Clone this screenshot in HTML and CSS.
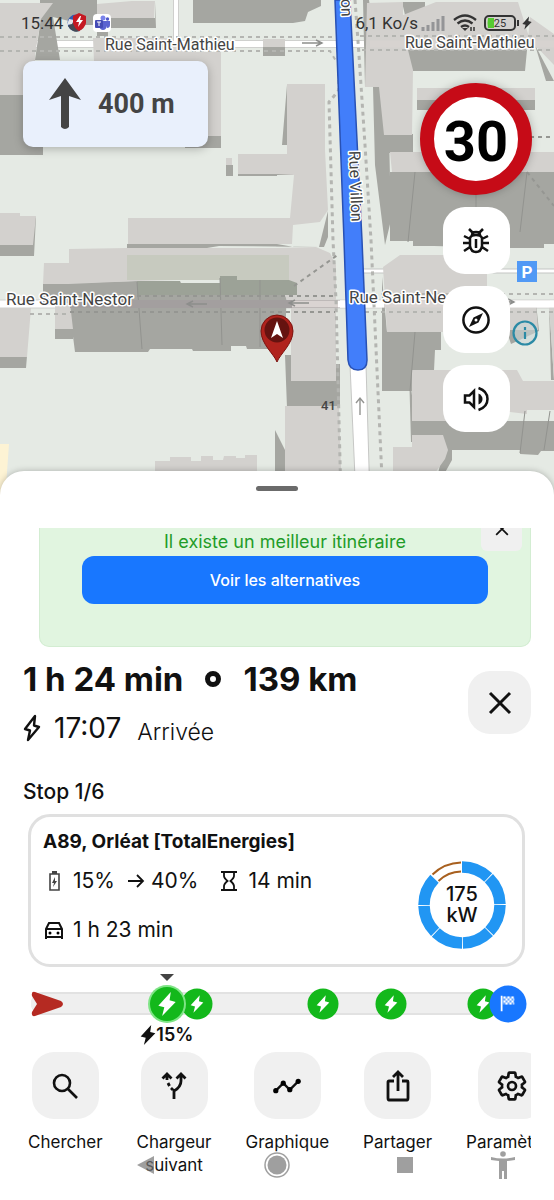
FILE: index.html
```html
<!DOCTYPE html>
<html lang="fr">
<head>
  <meta charset="UTF-8">
  <meta name="viewport" content="width=device-width, initial-scale=1">
  <title>Navigation</title>
  <link rel="stylesheet" href="styles.css">
</head>
<body>
<!-- shared icons -->
<svg width="0" height="0" class="defs" aria-hidden="true">
  <symbol id="bolt" viewBox="0 0 24 24"><path d="M15.500 1 4 13.500l5.500 1.600L7.500 23 20 10.200l-5.600-1.600z"/></symbol>
  <symbol id="cross" viewBox="0 0 24 24"><path d="M2 2l20 20M22 2L2 22" fill="none" stroke="currentColor" stroke-width="3"/></symbol>
</svg>

<section class="map">
  <svg class="map_canvas" viewBox="0 0 554 500" preserveAspectRatio="xMidYMin slice" aria-hidden="true">
    <rect width="554" height="500" fill="#e5eae4"/>
    <path d="M0 444h9l-4 56H0z" fill="#fdf3d4"/>
    <!-- roads -->
    <g stroke="#fff" fill="none">
      <path d="M0 44h554" stroke="#cfd0ce" stroke-width="8"/><path d="M0 44h554" stroke-width="6"/>
      <path d="M176 0v41" stroke="#cfcfcd" stroke-width="6"/><path d="M176 0v41" stroke-width="4"/>
      <path d="M0 304h554" stroke="#cfd0ce" stroke-width="9"/><path d="M0 304h554" stroke-width="7"/>
      <path d="M362 271h192" stroke="#c4c5c3" stroke-width="5"/><path d="M362 271h192" stroke-width="3"/>
    </g>
    <!-- walls -->
    <g fill="#a5a6a1">
      <path d="M0 95h43v60H0zM40 0h57v18h58V2l1 26h-48v8H97V25H85l-32-8 7 43H35l5-35z"/>
      <path d="M185 136h36v12h-36zM193 0h128v6l-13 6-3 9-12 2H193zM263 47h22v9h-22zM226 165h7v11h-7zM238 165h39v11h-39zM165 52h5v9h-4z"/>
      <path d="M0 243l36-26-2 39H0zM127 244h150l17 3h30l4-10v-26l-9 36-100-1-12 2H127zM276 165h17v10h-17zM282 145l5-60v60z"/>
      <path d="M43 284l26-1 68-2 43 0 1 2h39v-4l17 0v2l50-1-2 69h-38l-1-3h-15v5h-38l-1-2h-42l-2 3H75l-6-47H43zM31 308l-5 60H0v-11l27-1zM55 329h18v10H55z"/>
      <path d="M285 355h7v26h44V364h4v44h-53zM275 430l10 20v50h-10z"/>
      <path d="M363 0h6l12 85 8 50 2 85-6 25-10-80-2-78h-8zM402 2h23v13h-20zM405 50h122l-2 21H413l-8-5zM417 88l118 12v10H417zM384 134h29v19h-26zM390 172h164v72h-10v4h-40l-70-2h-21v-5h-23zM535 45l19 36H546z"/>
      <path d="M382 277l5 55h54v18l-6 0-2 41H382zM409 370l6 51h139v30h-13l-3 4-18-1v-4h-68v10l-10 18h-5l8-35-34-1zM549 303l5 77h-3zM536 303l3 28-28 13-4-12z"/>
    </g>
    <!-- roofs -->
    <g fill="#d3d1ce">
      <path d="M0 3h53l-12 16-6 36v40H0zM97 4l35-3h23l-1 17H97zM93 38h75l18 14h35v84h-36v-5L95 85zM263 39h22v8h-22z"/>
      <path d="M287 84h38v66l3 60-8 12-27 3-1 19H128v-26h162l4-43-17-1h-39v-20h49zM0 213h20v3h16l-3 29H0zM226 158h6v7h-6z"/>
      <path d="M44 263h25v-14l58-1h150l39-1 14 6 6 12v116h-45v-73l-14-28-57-1-83 2-68 3H43zM0 308h31l-4 49H0zM55 303h15l3 26H55zM285 406h54l3 94h-57zM155 461h15v-4h21v4h10v-5h12v4h10l1-4h12v2h9v-3h12v45H155z"/>
      <path d="M367 3l36-1v13l33-13h82l12 38 24 25V34l-24-17-3 33H408l5 20-1 65h-28l-5-48h-14zM417 88h118v12H417zM390 152h164v20H392zM383 267l17-12h80l7 10v67H387zM412 370h105l6 11h31v29h-27v4l-32-4h-46v11h-37zM412 435h31l5 15-3 9-10 14v27h-42v-53h19zM507 303h29l2 27h-31zM549 303h5v77z"/>
    </g>
    <!-- green block under the street -->
    <path d="M127 255h162v25H127z" fill="#c7cabf"/>
    <path d="M137 281h43v2h40v-7h17v4h52l8 3v12H137z" fill="#9ca297"/>
    <g stroke="#92938f" stroke-width="1" fill="none"><path d="M137 282l5 67M220 278l2 67M260 280v67M415 332l-5 59M415 172l-7 70M527 172l-7 60M476 190v20M525 411l-5 42M550 411l-6 39"/></g>
    <path d="M70 304h270" stroke="#a39f9f" stroke-width="8"/>
    <path d="M292 304h46M370 304h180" stroke="#dad4d2" stroke-width="7"/>
    <path d="M338 304h15M362 304h22M510 304h44" stroke="#fff" stroke-width="7"/>
    <path d="M370 44h184" stroke="#d7d3d0" stroke-width="7"/>
    <!-- side walks -->
    <g stroke="#b4b5b1" stroke-width="2" stroke-dasharray="4 4" fill="none">
      <path d="M0 37h334M0 51h330l6 10M360 36h194M362 50h192"/>
      <path d="M30 314h40M365 312h189M365 294h189" />
      <path d="M337 0l2 90-10 12 4 138 3 60 5 200M355 0l4 55 6 90 6 95 12 260" stroke-width="3"/>
      <path d="M70 312h265M137 296h200M294 286l45-32M530 137h24M527 172l27 34" stroke="#959692"/>
    </g>
    <!-- one way arrows -->
    <g stroke="#8d8e8c" stroke-width="1.400" fill="none">
      <path d="M207 304h-20m6-3l-6 3 6 3M309 303h-20m6-3l-6 3 6 3M302 43h20m-6-3l6 3-6 3M496 302h18m-6-3l6 3-6 3"/>
    </g>
    <!-- route -->
    <path d="M350 365h16l4 135h-14z" fill="#fff" stroke="#c6c7c5"/>
    <path d="M360 415v-17m-4 5l4-5 4 5" stroke="#939491" stroke-width="1.400" fill="none"/>
    <path d="M335 0h15l12 240 5 120q0 10-9 10t-10-10l-4-120z" fill="#427efa" stroke="#2851b4" stroke-width="1.500"/>
    <g class="map_label">
      <text x="105" y="50">Rue Saint-Mathieu</text>
      <text x="405" y="48">Rue Saint-Mathieu</text>
      <text class="map_street" x="6" y="305">Rue Saint-Nestor</text>
      <text class="map_street" x="349" y="303">Rue Saint-Ne</text>
      <text transform="translate(349 151) rotate(88)">Rue Villon</text>
      <text transform="translate(341 -1) rotate(88)">on</text>
      <text class="map_number" x="321" y="410">41</text>
    </g>
    <!-- poi -->
    <rect x="517" y="261" width="20" height="21" fill="#5199f5"/>
    <text class="map_parking" x="527" y="278">P</text>
    <circle cx="525" cy="333" r="11.500" fill="#c9d5d6" fill-opacity=".6" stroke="#2b8aa5" stroke-width="2.200"/>
    <path d="M525 327v3M525 332v7" stroke="#2b8aa5" stroke-width="2.200"/>
    <!-- position -->
    <path d="M277 362c-3-8-16-18-16-31a16 16 0 0 1 32 0c0 13-13 23-16 31z" fill="#b0231d" stroke="#7c130f"/>
    <circle cx="277" cy="330" r="12.500" fill="#651310"/>
    <path d="M277 321l6 17-6-4-6 4z" fill="#fff"/>
  </svg>

  <header class="status">
    <span>15:44</span>
    <svg class="status_app" viewBox="0 0 20 20" aria-hidden="true">
      <circle cx="9" cy="10" r="8.500" fill="#315bb2"/><path d="M1 13l5-4 7 9q-7 3-12-5z" fill="#454b54"/><path d="M2 6l5 1-2 4-5 1z" fill="#e4e7eb"/>
      <path d="M12 0l7 3v7q-1 5-7 8-5-3-6-8V3z" fill="#c51922"/><path d="M13 3l-4 6h3l-1 5 5-7h-3l1-4z" fill="#fff"/>
    </svg>
    <svg class="status_app" viewBox="0 0 20 20" aria-hidden="true">
      <rect x="1" y="1" width="18" height="18" rx="4" fill="#fff"/><circle cx="11" cy="5" r="2.500" fill="#7b83eb"/><circle cx="15.500" cy="6" r="1.700" fill="#5059c9"/>
      <path d="M7 8h8v5q-1 4-4 4t-4-4zM15 8h3v4q0 3-3 3z" fill="#5b63d0"/><rect x="3" y="7" width="8" height="8" rx="1" fill="#444bb5"/><path d="M5 9h4M7 9v4" stroke="#fff"/>
    </svg>
    <span class="status_net">6,1 Ko/s</span>
    <svg class="status_signal" viewBox="0 0 26 16" aria-hidden="true"><path d="M2 12v4M7 10v6M12 7v9M17 4v12M22 1v15" stroke="#85868a" stroke-opacity=".8" stroke-width="3"/></svg>
    <svg class="status_wifi" viewBox="0 0 24 18" aria-hidden="true"><path d="M1 6q11-9 22 0M4.500 9.500q7.500-6 15 0M8 13q4-3 8 0" fill="none" stroke="#333" stroke-width="2.300"/><path d="M12 17l-3-3h6z" fill="#333"/><path d="M18 13v4M21 13v4" stroke="#333" stroke-width="1.500"/></svg>
    <svg class="status_battery" viewBox="0 0 36 18" aria-hidden="true"><rect x="1" y="2" width="30" height="14" rx="4" fill="none" stroke="#333" stroke-width="2"/><path d="M4 4h6v10H4q-1-5 0-10z" fill="#55cb32"/><path d="M34 6v6" stroke="#333" stroke-width="2"/><text x="16" y="13">25</text></svg>
    <svg class="status_bolt" aria-hidden="true"><use href="#bolt"/></svg>
  </header>

  <div class="turn">
    <svg class="turn_arrow" viewBox="0 0 34 52" aria-hidden="true"><path d="M17 0l16 22-12-4v31q-4 4-8 0V18L1 22z"/></svg>
    <strong>400 m</strong>
  </div>

  <div class="tools">
    <div class="speed">30</div>
    <button class="tile tile_map" type="button" aria-label="Signaler un bug">
      <svg viewBox="0 0 28 28" fill="none" stroke="#111" stroke-width="2.500"><path d="M8 11q1-3 6-3t6 3v8q-1 6-6 6t-6-6zM10 8q0-3 4-3t4 3M7 2l4 4M21 2l-4 4M2 9l6 3M26 9l-6 3M1 16h7M20 16h7M2 24l6-4M26 24l-6-4M14 12v9"/></svg>
    </button>
    <button class="tile tile_map" type="button" aria-label="Boussole">
      <svg viewBox="0 0 28 28"><circle cx="14" cy="14" r="12.600" fill="none" stroke="#111" stroke-width="2.500"/><path d="M21 7l-4.500 9.500L7 21l4.500-9.500zM14 12.500a1.500 1.500 0 1 0 0 3 1.500 1.500 0 0 0 0-3z" fill="#111" fill-rule="evenodd"/></svg>
    </button>
    <button class="tile tile_map" type="button" aria-label="Son">
      <svg viewBox="0 0 28 28" fill="none" stroke="#111" stroke-width="2.500"><path d="M3 10.500h4.500L12 6v16l-4.500-4.500H3z"/><path d="M16.500 3q9 3 9 11t-9 11"/><path d="M16.500 8.500q4 2 4 5.500t-4 5.500z" fill="#111" stroke="none"/></svg>
    </button>
  </div>
</section>

<main class="sheet">
  <div class="handle"></div>
  <div class="content">
    <section class="banner">
      <button class="banner_close" type="button" aria-label="Fermer"><svg aria-hidden="true"><use href="#cross"/></svg></button>
      <p>Il existe un meilleur itinéraire</p>
      <button class="banner_btn" type="button">Voir les alternatives</button>
    </section>

    <section class="trip">
      <div class="trip_info">
        <h1>1 h 24 min <i class="dot"></i> 139 km</h1>
        <p class="arrival">
          <svg viewBox="0 0 18 28" aria-hidden="true"><path d="M12 2L2 15l5 1.500L5 26l11-13-5-1.500z" fill="none" stroke="#111" stroke-width="2.400" stroke-linejoin="round"/></svg>
          <span class="time">17:07</span><span class="arrival_text">Arrivée</span>
        </p>
      </div>
      <button class="tile tile_close" type="button" aria-label="Quitter"><svg aria-hidden="true"><use href="#cross"/></svg></button>
    </section>

    <h2>Stop 1/6</h2>
    <article class="card">
      <div class="card_info">
        <h3>A89, Orléat [TotalEnergies]</h3>
        <p class="card_row">
          <svg class="ico" viewBox="0 0 22 22" aria-hidden="true"><path d="M7 4h9v16H7z" fill="none" stroke="#444" stroke-width="1.600"/><path d="M9 1h5v3H9zM12 7l-3 6h2l-1 4 4-6h-2z" fill="#444"/></svg>
          <span>15%</span>
          <svg class="ico ico_arrow" viewBox="0 0 18 18" aria-hidden="true"><path d="M1 9h15M10 3l6 6-6 6" fill="none" stroke="#111" stroke-width="1.800"/></svg>
          <span class="to">40%</span>
          <svg class="ico" viewBox="0 0 22 22" aria-hidden="true"><path d="M3 2h16M3 20h16M6 2v4q0 2 3.500 5Q6 14 6 16v4M16 2v4q0 2-3.500 5 3.500 3 3.500 5v4" fill="none" stroke="#111" stroke-width="1.800"/></svg>
          <span>14 min</span>
        </p>
        <p class="card_row card_drive">
          <svg class="ico" viewBox="0 0 22 22" aria-hidden="true"><path d="M3 10l3-6h10l3 6v8H3zM3 10h16M3 17v3M19 17v3" fill="none" stroke="#111" stroke-width="2"/><circle cx="7" cy="14" r="1.500"/><circle cx="15" cy="14" r="1.500"/></svg>
          <span>1 h 23 min</span>
        </p>
      </div>
      <div class="ring">
        <svg viewBox="0 0 88 88" aria-hidden="true">
          <circle cx="44" cy="44" r="38" fill="none" stroke="#2196f3" stroke-width="11.500" pathLength="80" stroke-dasharray="9.700 .3 9.700 .3 9.700 .3 9.700 .3 9.700 .3 9.700 .3 9.700 10.300" transform="rotate(-90 44 44)"/>
          <path d="M14.500 13.500A42.500 42.500 0 0 1 43 1.500M20.500 20A33.500 33.500 0 0 1 43 10.500" fill="none" stroke="#a8601f" stroke-width="2"/>
        </svg>
        <span>175<br>kW</span>
      </div>
    </article>

    <div class="track">
      <svg class="track_car" viewBox="0 0 33 26" aria-hidden="true"><path d="M4 1l26 9q4 3 0 6L4 25q-4 1-3-4l5-8-5-8q-1-5 3-4z" fill="#b52a22"/></svg>
      <span class="stop stop_on" style="left:27.500%"><svg><use href="#bolt"/></svg><span class="stop_label"><svg><use href="#bolt"/></svg>15%</span></span>
      <span class="stop" style="left:33.600%"><svg><use href="#bolt"/></svg></span>
      <span class="stop" style="left:59.100%"><svg><use href="#bolt"/></svg></span>
      <span class="stop" style="left:72.900%"><svg><use href="#bolt"/></svg></span>
      <span class="stop" style="left:91.500%"><svg><use href="#bolt"/></svg></span>
      <span class="stop stop_end" style="left:96.500%"><svg viewBox="0 0 14 16"><path d="M1 0v16" stroke="#fff" stroke-width="2"/><path d="M2 1h12v8H2z" fill="#fff" fill-opacity=".35"/><path d="M3 2h11M5 4h9M3 6h11M5 8h9" stroke="#fff" stroke-width="2" stroke-dasharray="2 2"/></svg></span>
    </div>

    <div class="actions">
      <button class="action" type="button">
        <span class="tile"><svg viewBox="0 0 28 28" fill="none" stroke="#111" stroke-width="2.600"><circle cx="11" cy="11" r="8"/><path d="M17 17l9 9"/></svg></span>
        Chercher
      </button>
      <button class="action" type="button">
        <span class="tile"><svg viewBox="0 0 28 28" fill="none" stroke="#111" stroke-width="2.800"><path d="M14 27V17M14 19q7-4 7-10V3M16.500 6.500L21 2l4.500 4.500M2.500 6.500L7 2l4.500 4.500M7 3v5"/><path d="M8 11l1.500 3M11 16l2 2"/></svg></span>
        Chargeur<br>suivant
      </button>
      <button class="action" type="button">
        <span class="tile"><svg viewBox="0 0 30 28"><path d="M2 20l9-9 7 7 9-9" fill="none" stroke="#111" stroke-width="2.600"/><circle cx="3" cy="19" r="2.800"/><circle cx="11" cy="11" r="2.800"/><circle cx="18" cy="18" r="2.800"/><circle cx="27" cy="9" r="2.800"/></svg></span>
        Graphique
      </button>
      <button class="action" type="button">
        <span class="tile"><svg class="share" viewBox="0 0 26 32" fill="none" stroke="#111" stroke-width="2.800"><path d="M9 11H4q-1 0-1 1v16q0 2 1 2h18q1 0 1-2V12q0-1-1-1h-5M13 21V3M8 7l5-5 5 5"/></svg></span>
        Partager
      </button>
      <button class="action" type="button">
        <span class="tile"><svg class="gear" viewBox="0 0 24 24"><path d="M19.430 12.980c.04-.32.07-.64.07-.98s-.03-.66-.07-.98l2.110-1.650c.19-.15.24-.42.12-.64l-2-3.460c-.12-.22-.39-.3-.61-.22l-2.490 1c-.52-.4-1.080-.73-1.690-.98l-.38-2.650C14.460 2.180 14.250 2 14 2h-4c-.25 0-.46.18-.49.42l-.38 2.650c-.61.25-1.170.59-1.690.98l-2.490-1c-.23-.09-.49 0-.61.22l-2 3.460c-.13.22-.07.49.12.64l2.110 1.650c-.04.32-.07.65-.07.980s.03.66.07.98l-2.110 1.650c-.19.15-.24.42-.12.64l2 3.460c.12.22.39.3.61.22l2.490-1c.52.4 1.080.73 1.690.98l.38 2.650c.03.24.24.42.49.42h4c.25 0 .46-.18.49-.42l.38-2.650c.61-.25 1.170-.59 1.690-.98l2.490 1c.23.09.49 0 .61-.22l2-3.460c.12-.22.07-.49-.12-.64z" fill="none" stroke="#111" stroke-width="2"/><circle cx="12" cy="12" r="3" fill="none" stroke="#111" stroke-width="2"/></svg></span>
        Paramètres
      </button>
    </div>
  </div>
</main>

<nav class="system" aria-label="Système">
  <svg width="18" height="20" viewBox="0 0 18 20"><path d="M0 10L17 1v18z"/></svg>
  <svg width="26" height="26" viewBox="0 0 26 26"><circle cx="13" cy="13" r="12" fill="none" stroke="#777" stroke-width="1.500"/><circle cx="13" cy="13" r="9.500"/></svg>
  <svg width="18" height="18" viewBox="0 0 18 18"><path d="M1 1h16v16H1z"/></svg>
  <svg width="26" height="28" viewBox="0 0 26 28"><circle cx="13" cy="3" r="2.800"/><path d="M1 6q12 3 24 0v3l-8 1v18h-3v-8h-2v8H9V10L1 9z"/></svg>
</nav>
</body>
</html>
```
FILE: styles.css
```css
*{
  margin: 0;
  padding: 0;
  box-sizing: border-box;
}
body{
  position: relative;
  display: flex;
  flex-direction: column;
  min-height: 100vh;
  background: #fff;
  color: #111;
  font-family: Inter, "Liberation Sans", sans-serif;
  overflow-x: hidden;
}
button{
  border: 0;
  background: none;
  color: inherit;
  font-family: inherit;
}
svg{
  flex: none;
}
.defs{
  position: absolute;
}

/* map */
.map{
  position: relative;
  flex: none;
  height: 500px;
  overflow: hidden;
  font-family: Roboto, sans-serif;
}
.map_canvas{
  position: absolute;
  width: 100%;
  height: 100%;
}
.map_label{
  font-size: 16px;
  fill: #444;
  stroke: #fff;
  stroke-width: 3px;
  stroke-linejoin: round;
  paint-order: stroke;
}
.map_street{
  font-size: 17px;
}
.map_number{
  font-size: 13px;
  font-weight: 500;
  stroke: none;
}
.map_parking{
  font-size: 17px;
  font-weight: 700;
  fill: #fff;
  text-anchor: middle;
}
.status{
  position: relative;
  display: flex;
  align-items: center;
  height: 46px;
  padding: 0 20px 0 21px;
  font-size: 17px;
  color: #333;
}
.status_app{
  width: 20px;
  height: 20px;
  margin-left: 4px;
}
.status_app + .status_app{
  margin-left: 5px;
}
.status_net{
  margin-left: auto;
}
.status_signal{
  width: 26px;
  height: 16px;
  margin-left: 3px;
}
.status_wifi{
  width: 24px;
  height: 18px;
  margin-left: 6px;
}
.status_battery{
  width: 36px;
  height: 18px;
  margin-left: 7px;
}
.status_battery text{
  font-size: 11px;
  fill: #333;
  text-anchor: middle;
}
.status_bolt{
  width: 14px;
  height: 16px;
  fill: #333;
}
.turn{
  position: relative;
  display: inline-flex;
  align-items: center;
  gap: 16px;
  height: 86px;
  margin: 15px 0 0 23px;
  padding: 0 33px 0 25px;
  background: #e9f0fc;
  border-radius: 10px;
  box-shadow: 0 2px 10px rgba(0,0,0,.25);
  font-size: 27px;
  color: #444;
}
.turn_arrow{
  width: 34px;
  height: 52px;
  fill: #444;
}
.tools{
  position: absolute;
  top: 83px;
  right: 22px;
  display: flex;
  flex-direction: column;
  align-items: center;
  gap: 12px;
}
.speed{
  width: 112px;
  height: 112px;
  border: 14px solid #c60b17;
  border-radius: 50%;
  background: #fff;
  box-shadow: 0 0 8px rgba(0,0,0,.25);
  color: #000;
  font-size: 56px;
  font-weight: 700;
  line-height: 90px;
  text-align: center;
}
.tile{
  display: flex;
  align-items: center;
  justify-content: center;
  width: 67px;
  height: 67px;
  border-radius: 22px;
  background: #f0f0f0;
}
.tile svg{
  width: 28px;
  height: 28px;
}
.tile_map{
  background: #fff;
}

/* bottom sheet */
.sheet{
  position: relative;
  flex: 1;
  margin-top: -29px;
  padding: 15px 23px 20px;
  background: #fff;
  border-radius: 24px 24px 0 0;
  box-shadow: 0 0 6px rgba(0,0,0,.25);
}
.handle{
  width: 42px;
  height: 5px;
  margin: 0 auto 37px;
  border-radius: 3px;
  background: #6b6b6b;
}
.content{
  overflow: hidden;
}
.banner{
  position: relative;
  margin: -24px 0 0 16px;
  padding: 26px 42px 42px;
  background: #e1f5e0;
  border: 1px solid #d3edd2;
  border-width: 0 1px 1px;
  border-radius: 10px;
  color: #1f9c28;
  font-size: 18px;
  line-height: 24px;
  text-align: center;
}
.banner_close{
  position: absolute;
  top: 6px;
  right: 8px;
  width: 41px;
  height: 41px;
  border-radius: 6px;
  background: #f0f0f0;
  color: #111;
}
.banner_close svg{
  width: 14px;
  height: 14px;
}
.banner_btn{
  width: 100%;
  height: 48px;
  margin-top: 2px;
  border-radius: 12px;
  background: #1877ff;
  color: #fff;
  font-size: 16px;
  font-weight: 500;
  display: block;
}
.trip{
  display: flex;
  justify-content: space-between;
  padding-top: 13px;
}
.tile_close{
  width: 63px;
  height: 63px;
  margin-top: 11px;
}
.tile_close svg{
  width: 24px;
  height: 24px;
}
h1{
  display: flex;
  align-items: center;
  font-size: 33px;
  line-height: 38px;
}
.dot{
  width: 16px;
  height: 16px;
  margin: 0 22px;
  border: 5px solid #111;
  border-radius: 50%;
}
.arrival{
  display: flex;
  align-items: center;
  margin-top: 13px;
  line-height: 34px;
}
.arrival svg{
  width: 18px;
  height: 28px;
  margin-right: 13px;
}
.time{
  font-size: 28px;
}
.arrival_text{
  margin: 8px 0 0 16px;
  font-size: 23px;
  line-height: 26px;
  font-weight: 300;
}
h2{
  margin-top: 35px;
  font-size: 21px;
  line-height: 24px;
  font-weight: 500;
}
.card{
  display: flex;
  justify-content: space-between;
  align-items: flex-end;
  margin: 10px 6px 0 5px;
  padding: 13px 16px 20px 12px;
  border: 3px solid #e0e0e0;
  border-radius: 22px;
}
h3{
  font-size: 19px;
  line-height: 24px;
}
.card_row{
  display: flex;
  align-items: center;
  margin-top: 13px;
  font-size: 21px;
  line-height: 28px;
}
.card_drive{
  margin-top: 21px;
}
.ico{
  width: 22px;
  height: 22px;
  margin-right: 8px;
}
.ico_arrow{
  width: 18px;
  height: 18px;
  margin: 0 6px 0 12px;
}
.to{
  margin-right: 20px;
}
.ring{
  display: grid;
  place-items: center;
  width: 88px;
  height: 88px;
  margin-bottom: -5px;
}
.ring svg, .ring span{
  grid-area: 1 / 1;
}
.ring span{
  font-size: 20px;
  line-height: 21px;
  font-weight: 500;
  text-align: center;
}

/* progress along the route */
.track{
  position: relative;
  height: 23px;
  margin: 25px 6px 0 8px;
  border: 2px solid #e2e2e2;
  border-width: 2px 0;
  border-radius: 12px;
  background: #efefef;
}
.track_car{
  position: absolute;
  left: 0;
  top: -3px;
  width: 33px;
  height: 26px;
}
.stop{
  position: absolute;
  top: 50%;
  display: flex;
  align-items: center;
  justify-content: center;
  width: 31px;
  height: 31px;
  border-radius: 50%;
  background: #13b81b;
  transform: translate(-50%, -50%);
}
.stop svg{
  width: 19px;
  height: 19px;
  fill: #fff;
}
.stop_on{
  z-index: 1;
  width: 34px;
  height: 34px;
  box-shadow: 0 0 0 2px #7fe486;
}
.stop_on > svg{
  width: 26px;
  height: 26px;
}
.stop_on::before{
  content: "";
  position: absolute;
  bottom: 40px;
  border: 7px solid transparent;
  border-top-color: #444;
  border-bottom: 0;
}
.stop_label{
  position: absolute;
  top: 37px;
  display: flex;
  align-items: center;
  font-size: 18px;
  line-height: 22px;
  font-weight: 600;
}
.stop .stop_label svg{
  width: 22px;
  height: 22px;
  margin: 0 -3px;
  fill: #111;
}
.stop_end{
  width: 37px;
  height: 37px;
  background: #1877ff;
}
.stop_end svg{
  width: 14px;
  height: 16px;
}
.actions{
  display: flex;
  gap: 34px;
  margin-top: 37px;
  padding-left: 5px;
}
.action{
  flex: none;
  display: block;
  font-size: 17px;
  line-height: 23px;
  align-self: flex-start;
}
.action .tile{
  margin: 0 auto 12px;
}
.tile .share{
  width: 26px;
  height: 32px;
}
.tile .gear{
  width: 32px;
  height: 32px;
}

/* system buttons over the sheet */
.system{
  position: absolute;
  bottom: 21px;
  left: 0;
  right: 0;
  display: grid;
  grid-template-columns: 132fr 130fr 126fr 70fr;
  align-items: center;
  justify-items: center;
  padding: 0 16px 0 80px;
  fill: #777;
  opacity: .7;
}
```
